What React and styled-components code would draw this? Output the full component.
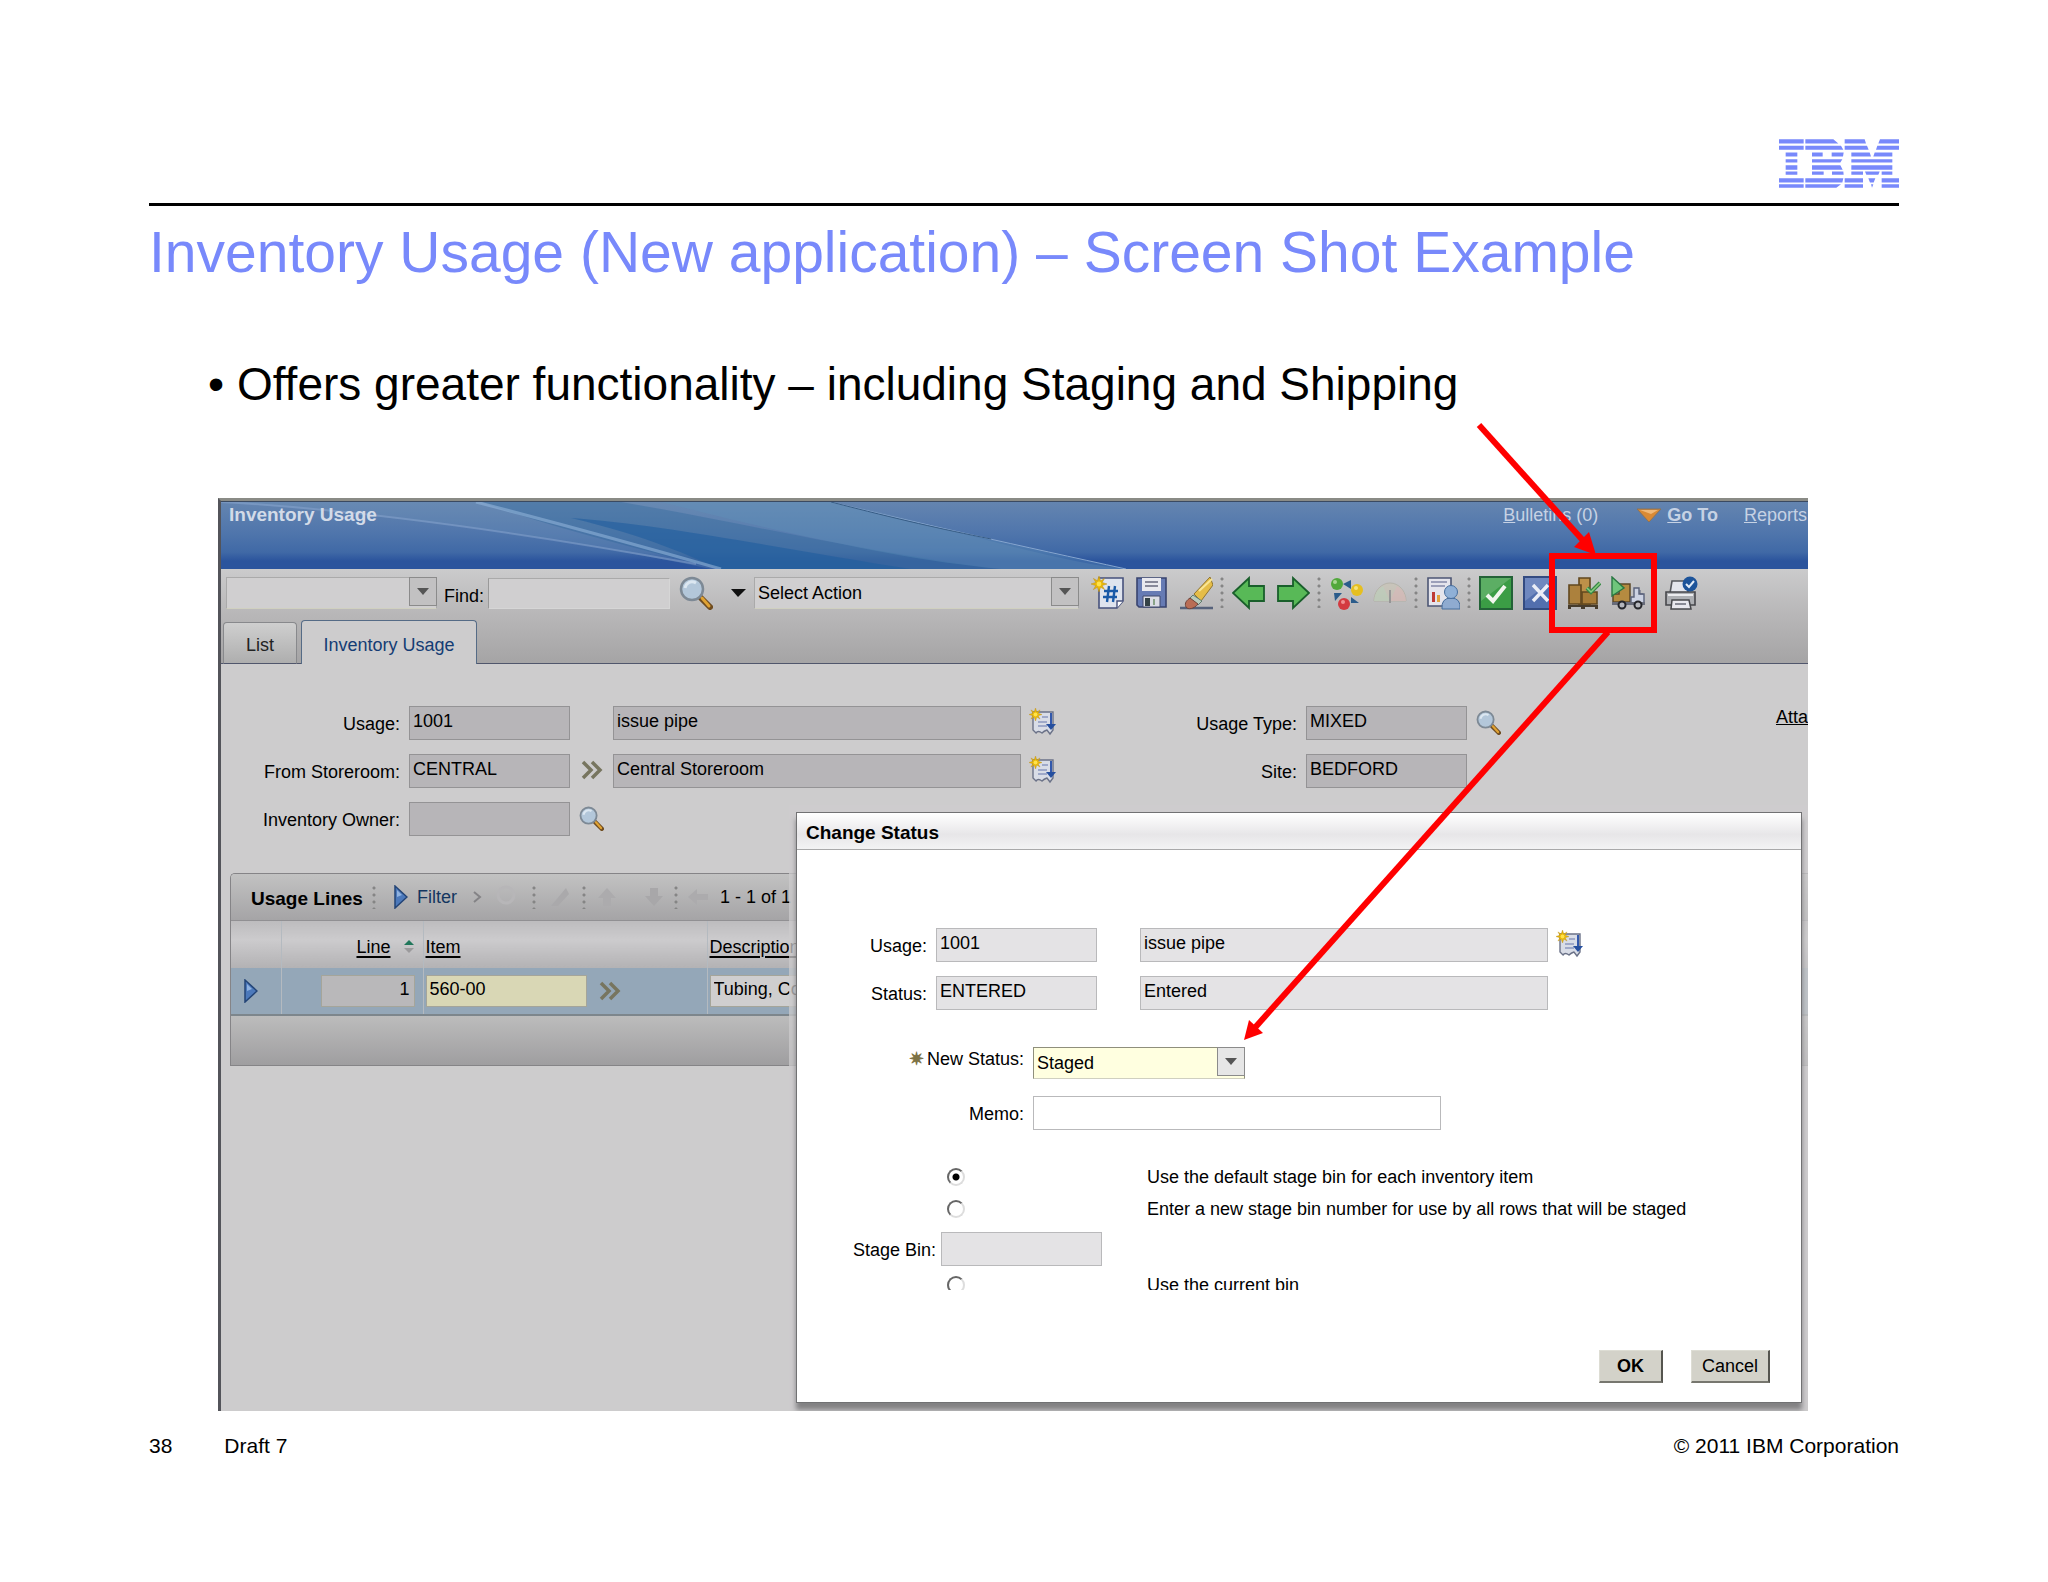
import React from "react";
import styled, { createGlobalStyle } from "styled-components";

const GlobalStyle = createGlobalStyle`
  * {
    box-sizing: border-box;
  }

  body {
    margin: 0;
    background: #fff;
    color: #000;
    font-family: "Liberation Sans", Arial, sans-serif;
  }

  input,
  select,
  button {
    font: inherit;
    color: inherit;
    margin: 0;
  }
`;

const Slide = styled.main`
  padding: 139px 149px 120px;
`;

const SlideHeader = styled.header`
  display: flex;
  justify-content: flex-end;
  padding-bottom: 15px;
  border-bottom: 3px solid #000;
`;

const SlideTitle = styled.h1`
  margin: 14px 0 0;
  color: #7889fb;
  font-size: 57px;
  font-weight: 400;
  line-height: 64px;
`;

const Bullet = styled.p`
  margin: 74px 0 88px;
  padding-left: 59px;
  font-size: 46px;
  line-height: 52px;
`;

const SlideFooter = styled.footer`
  display: flex;
  gap: 52px;
  margin-top: 23px;
  font-size: 21px;
  line-height: 24px;
`;

const Copyright = styled.span`
  margin-left: auto;
`;

const Figure = styled.div`
  position: relative;
  margin: 0 91px 0 69px;
`;

const Frame = styled.section`
  position: relative;
  overflow: hidden;
  min-height: 913px;
  border-left: 3px solid #53545a;
  border-top: 3px solid #8a8b86;
  background: #cdcccd;
  font-size: 18px;
  line-height: 22px;
`;

const Annotations = styled.svg`
  position: absolute;
  left: 0;
  top: 0;
  overflow: visible;
  pointer-events: none;
`;

const Banner = styled.div`
  position: relative;
  display: flex;
  align-items: flex-start;
  height: 68px;
  padding: 2px 1px 0 8px;
  border-top: 1px solid #3a4a62;
  background: linear-gradient(#6485b0, #5076ac 45%, #4069a6 75%, #2b549d 88%, #2b549d);
  color: #c6d2e4;
`;

const BannerArt = styled.svg`
  position: absolute;
  left: 0;
  top: 0;
  width: 100%;
  height: 100%;
`;

const AppTitle = styled.h2`
  position: relative;
  margin: 0 auto 0 0;
  font-size: 19px;
  line-height: 22px;
  color: #d3dbe8;
`;

const BannerLink = styled.a`
  position: relative;
  display: flex;
  align-items: center;
  gap: 5px;
  margin-left: ${(p) => p.$gap}px;
  color: inherit;
  text-decoration: none;
  white-space: pre;
  font-weight: ${(p) => (p.$bold ? 700 : 400)};
`;

const Toolbar = styled.div`
  border-bottom: 1px solid #50566c;
  background: linear-gradient(#cbcbcc, #b9b8b9 45%, #a5a4a5);
`;

const ToolRow = styled.div`
  display: flex;
  align-items: center;
  height: 51px;
  padding: 1px 0 4px 5px;
`;

const Combo = styled.div`
  position: relative;
  width: ${(p) => p.$width}px;
  height: 32px;
`;

const ComboSelect = styled.select`
  appearance: none;
  width: 100%;
  height: 100%;
  padding: 0 30px 1px 3px;
  border: 1px solid ${(p) => (p.$required ? "#8f8f7c" : "#aaa")};
  border-bottom-color: #d0d0c0;
  border-radius: 0;
  background: ${(p) => (p.$required ? "#ffffe0" : "#d0cfd0")};
`;

const ComboArrow = styled.span`
  position: absolute;
  top: 0;
  right: 0;
  display: flex;
  align-items: center;
  justify-content: center;
  width: 28px;
  height: 29px;
  border: 1px solid #8b8b8b;
  background: ${(p) => (p.$light ? "#e6e6e6" : "#c2c1c2")};
  pointer-events: none;
`;

const FindLabel = styled.label`
  margin: 6px 4px 0 7px;
`;

const FindInput = styled.input`
  width: 182px;
  height: 31px;
  margin-right: 9px;
  border: 1px solid #aaa;
  border-color: #aaa #d6d6d6 #d6d6d6 #999;
  background: #d0cfd0;
`;

const IconButton = styled.button`
  display: flex;
  flex: none;
  align-items: center;
  justify-content: center;
  padding: 0;
  border: 0;
  background: none;
`;

const Tools = styled.div`
  display: flex;
  gap: 10px;
  margin-left: 12px;
`;

const Dots = styled.span`
  flex: none;
  width: 4px;
  height: ${(p) => p.$height || 32}px;
  margin: 0 -2px 0 -3px;
  background: radial-gradient(circle at 2px 3px, #858585 1px, transparent 2px) 0 0 / 4px 7px;
`;

const PrintSlot = styled.span`
  display: flex;
  margin-left: 9px;
`;

const Tabs = styled.div`
  display: flex;
  align-items: flex-end;
  gap: 4px;
  height: 44px;
  margin-bottom: -1px;
  padding-left: 2px;
`;

const Tab = styled.button`
  width: ${(p) => p.$width}px;
  height: ${(p) => (p.$active ? 44 : 42)}px;
  padding: 4px 0 0;
  border: 1px solid ${(p) => (p.$active ? "#556b86" : "#88898c")};
  border-bottom: ${(p) => (p.$active ? "0" : "1px solid #50566c")};
  border-radius: 4px 4px 0 0;
  background: ${(p) => (p.$active ? "#cdcccd" : "linear-gradient(#cfcfcf, #aeaeae)")};
  color: ${(p) => (p.$active ? "#143c74" : "#222")};
`;

const Form = styled.div`
  display: grid;
  gap: 14px;
  padding: 42px 0 37px;
`;

const FormRow = styled.div`
  display: flex;
  height: 34px;
`;

const Label = styled.label`
  flex: none;
  width: ${(p) => p.$width}px;
  padding-top: ${(p) => (p.$raised ? 1 : 7)}px;
  margin-right: ${(p) => p.$gap || 9}px;
  text-align: right;
  white-space: nowrap;
`;

const Field = styled.input`
  flex: none;
  width: ${(p) => (p.$wide ? 408 : 161)}px;
  height: 34px;
  padding: 0 3px 4px;
  border: 1px solid ${(p) => (p.$light ? "#b9b9bb" : "#949395")};
  border-radius: 0;
  outline: 0;
  background: ${(p) => (p.$memo ? "#fff" : p.$light ? "#e4e3e5" : "#b7b5b8")};
`;

const Slot = styled.span`
  display: flex;
  flex: none;
  align-items: center;
  justify-content: center;
  width: 43px;
  height: 32px;
`;

const AttachLink = styled.a`
  margin-left: auto;
  color: #000;
`;

const LinesPanel = styled.section`
  margin-left: 9px;
  border: 1px solid #858487;
  border-right: 0;
  border-radius: 5px 0 0 0;
`;

const LinesBar = styled.div`
  display: flex;
  align-items: center;
  height: 47px;
  padding-left: 20px;
  border-bottom: 1px solid #919093;
  border-radius: 4px 0 0 0;
  background: linear-gradient(#c2c2c2, #a5a4a6);
`;

const LinesTitle = styled.h3`
  margin: 3px 12px 0 0;
  font-size: 19px;
  line-height: 22px;
`;

const FilterButton = styled.button`
  display: flex;
  align-items: center;
  gap: 9px;
  margin: 0 16px 0 20px;
  padding: 0;
  border: 0;
  background: none;
  color: #143660;
`;

const GhostIcons = styled.span`
  display: flex;
  justify-content: space-around;
  width: ${(p) => p.$width}px;
`;

const LinesTable = styled.table`
  width: 100%;
  border-collapse: collapse;
  table-layout: fixed;

  th {
    height: 47px;
    padding: 4px 0 0 2px;
    background: linear-gradient(#bdbcbe, #cccbcd 40%, #b3b2b4);
    text-align: left;
    font-weight: 400;
  }

  td {
    height: 46px;
    padding: 0 0 0 2px;
    background: #94a7b8;
  }

  th + th,
  td + td {
    border-left: 1px solid #b4bac0;
  }
`;

const Column = styled.col`
  width: ${(p) => p.$width}px;
`;

const SortLink = styled.a`
  color: #000;
  text-decoration: underline;
  text-decoration-thickness: 2px;
  text-underline-offset: 3px;
`;

const CellFlex = styled.div`
  display: flex;
  align-items: center;
  justify-content: ${(p) => (p.$end ? "flex-end" : "flex-start")};
  gap: 12px;
  padding: 0 8px 0 ${(p) => p.$indent || 0}px;
`;

const CellInput = styled.input`
  width: ${(p) => p.$width}px;
  height: 32px;
  padding: 0 4px 4px 3px;
  border: 1px solid #a5a59a;
  background: ${(p) => p.$fill};
  text-align: ${(p) => (p.$end ? "right" : "left")};
`;

const LinesFooter = styled.div`
  height: 51px;
  border-top: 2px solid #7d868c;
  background: linear-gradient(#bcbcbc, #9f9ea0);
`;

const Dialog = styled.div`
  position: absolute;
  top: 311px;
  left: 575px;
  right: 6px;
  display: flex;
  flex-direction: column;
  height: 591px;
  border: 1px solid #717173;
  background: #fff;
  box-shadow: 0 7px 5px rgba(80, 80, 82, 0.6), 0 0 0 7px rgba(205, 204, 205, 0.75);
`;

const DialogTitle = styled.h2`
  margin: 0;
  padding: 9px 0 5px 9px;
  border-bottom: 1px solid #a9a9aa;
  background: linear-gradient(#fff, #e7e6e8 60%, #f3f3f4);
  font-size: 19px;
  line-height: 22px;
`;

const DialogBody = styled.div`
  overflow: hidden;
  height: 440px;
  padding: 78px 0 0 1px;
`;

const DialogRow = styled.div`
  display: flex;
  margin-bottom: ${(p) => p.$after}px;
`;

const Required = styled.span`
  padding-right: 3px;
  color: #7d7345;
  font-weight: 700;
`;

const Option = styled.div`
  display: flex;
  align-items: center;
  height: 32px;
  padding-left: 149px;
`;

const BinOptions = styled.div`
  margin-bottom: 7px;
`;

const Radio = styled.input`
  appearance: none;
  flex: none;
  width: 18px;
  height: 18px;
  margin-right: 182px;
  border: 2px solid;
  border-color: #666 #ddd #ddd #666;
  border-radius: 50%;
  background: ${(p) =>
    p.defaultChecked ? "radial-gradient(circle, #000 3px, #fff 4px)" : "#fff"};
`;

const DialogActions = styled.div`
  display: flex;
  justify-content: flex-end;
  gap: 28px;
  margin-top: auto;
  padding: 0 31px 19px 0;
`;

const ActionButton = styled.button`
  width: ${(p) => p.$width}px;
  height: 33px;
  padding: 0;
  border: 1px solid #ddddd4;
  border-right: 2px solid #55554f;
  border-bottom: 2px solid #77776f;
  background: #d3d2c9;
  font-weight: ${(p) => (p.$primary ? 700 : 400)};
`;

function IbmLogo() {
  return (
    <svg width="120" height="49" viewBox="0 0 360 146" fill="#7889fb" role="img" aria-label="IBM">
      <path d="M0 0H74V13H0zM0 20H74V32H0zM20 40H55V52H20zM20 60H55V70H20zM20 78H55V92H20zM20 97H55V107H20zM0 117H74V130H0zM0 135H74V146H0z" />
      <path d="M79 0H163L178 13H79zM79 20H186L193 32H79zM99 40H131V52H99zM158 40H194L192 52H158zM99 60H190L184 70H99zM99 78H184L191 92H99zM99 97H134V107H99zM159 97H193L194 107H159zM79 117H193L190 130H79zM79 135H186L172 146H79z" />
      <path d="M197 0H257L261 13H197zM197 20H264L269 32H197zM217 40H272L276 52H217zM217 60H340V70H217zM217 78H340V92H217zM217 97H252V107H217zM197 117H252V130H197zM197 135H252V146H197z" />
      <path d="M303 0H360V13H298zM295 20H360V32H291zM287 40H340V52H283zM258 97H302L298 107H262zM308 97H340V107H308zM268 117H289L284 130H273zM308 117H360V130H308zM276 135H283L279 146zM308 135H360V146H308z" />
    </svg>
  );
}

function BannerLines() {
  return (
    <BannerArt viewBox="0 0 1587 67" preserveAspectRatio="none" aria-hidden="true">
      <path d="M0 0C180 14 330 34 490 67H900C790 50 700 16 610 0z" fill="#7398bd" opacity=".25" />
      <path d="M260 0C340 28 420 48 500 67H780C640 50 520 20 400 0z" fill="#2c6398" opacity=".35" />
      <path d="M350 16C440 22 580 50 690 67H500C470 55 430 35 350 16z" fill="#1f5e9e" opacity=".6" />
      <path d="M440 0C560 30 680 58 780 67H904C800 45 700 22 610 0z" fill="#5f93bb" opacity=".35" />
      <path d="M0 0C150 8 320 34 475 62" fill="none" stroke="#8aa5cf" strokeWidth="2" opacity=".5" />
      <path d="M255 0C340 22 420 44 500 67" fill="none" stroke="#90b2d8" strokeWidth="3" opacity=".6" />
      <path d="M610 0C700 22 800 44 905 67" fill="none" stroke="#86a6cf" strokeWidth="1" />
      <path d="M610 0C680 18 720 27 770 37" fill="none" stroke="#365c85" strokeWidth="1" />
    </BannerArt>
  );
}

function ArrowDown({ size = 12, color = "#555" }) {
  return (
    <svg width={size} height={size / 2 + 1} viewBox="0 0 12 7" aria-hidden="true">
      <path d="M0 0H12L6 7z" fill={color} />
    </svg>
  );
}

function Magnifier({ size = 34 }) {
  return (
    <svg width={size} height={size} viewBox="0 0 34 34" aria-hidden="true">
      <path d="M22 22L31 31" stroke="#6f4c20" strokeWidth="6" strokeLinecap="round" />
      <path d="M23 22L30 30" stroke="#e0a232" strokeWidth="3" strokeLinecap="round" />
      <circle cx="13" cy="13" r="11" fill="#b3c7da" stroke="#7d8995" strokeWidth="2.5" />
      <path d="M6 12C7 7 12 4 17 7" fill="none" stroke="#dce7f1" strokeWidth="3" />
    </svg>
  );
}

function Star() {
  return (
    <g>
      <path d="M10 0L12 6L17 3L14 8L20 10L14 12L17 17L12 14L10 20L8 14L3 17L6 12L0 10L6 8L3 3L8 6z" fill="#e9b707" stroke="#b98d1a" strokeWidth=".6" />
      <circle cx="10" cy="10" r="3" fill="#ffe24a" />
    </g>
  );
}

function NoteIcon() {
  return (
    <svg width="27" height="28" viewBox="0 0 27 28" aria-hidden="true">
      <path d="M4 4H24V22L21 26L18 22Q15 23 13 25Q9 22 7 25L4 22z" fill="#d9dde7" stroke="#6b7288" strokeWidth="1.4" />
      <path d="M13 9H19M9 14H18M9 18H18" stroke="#8c98c0" strokeWidth="1.5" />
      <path d="M22 5V17" stroke="#3258ac" strokeWidth="2" />
      <path d="M17 16H27L22 22z" fill="#264f9f" />
      <g transform="scale(.65)">
        <Star />
      </g>
    </svg>
  );
}

function Chevrons() {
  return (
    <svg width="22" height="20" viewBox="0 0 22 20" aria-hidden="true">
      <path d="M2 2L10 10L2 18M11 2L19 10L11 18" fill="none" stroke="#77755f" strokeWidth="3.5" />
    </svg>
  );
}

function PlayIcon() {
  return (
    <svg width="14" height="24" viewBox="0 0 14 24" aria-hidden="true">
      <path d="M1 1L13 12L1 23z" fill="#4c79bb" stroke="#234476" strokeWidth="1.5" />
      <path d="M3 5L8 10L3 12z" fill="#8fb2e0" />
    </svg>
  );
}

const toolIcons = {
  "New Usage": (
    <>
      <path d="M8 2H32V25L26 32H8z" fill="#dfe4ee" stroke="#47527c" strokeWidth="1.6" />
      <path d="M32 25H26V32" fill="#fff" stroke="#47527c" strokeWidth="1.4" />
      <path d="M18 10L16 26M24 10L22 26M13 15H27M12 21H26" stroke="#195aa8" strokeWidth="2.4" />
      <g transform="scale(.8)">
        <Star />
      </g>
    </>
  ),
  Save: (
    <>
      <path d="M2 2H31V31H4L2 29z" fill="#667bb4" stroke="#39446f" strokeWidth="1.6" />
      <path d="M7 2H26V15H7z" fill="#e9e9ef" />
      <path d="M10 6H23M10 10H23" stroke="#88899a" strokeWidth="2" />
      <path d="M8 20H25V31H8z" fill="#dbdde5" stroke="#404a6d" />
      <path d="M10 22H15V30H10z" fill="#344246" />
      <path d="M18 23H20V29H18z" fill="#89a488" />
    </>
  ),
  Clear: (
    <>
      <path d="M1 32H34" stroke="#56627b" strokeWidth="2.5" />
      <path d="M15 18L31 1L34 9L22 25z" fill="#e5bd48" stroke="#8f7430" />
      <path d="M20 15L33 3" stroke="#f8e594" strokeWidth="2" />
      <path d="M14 19L23 25L19 29L10 23z" fill="#b9cbbb" stroke="#5f7b70" />
      <path d="M11 22L19 28C15 33 9 34 7 31C5 27 8 24 11 22z" fill="#b96d55" stroke="#70443a" />
    </>
  ),
  "Previous Record": <path d="M1 17L17 2V10H32V25H17V32z" fill="#58b957" stroke="#195f2b" strokeWidth="1.8" />,
  "Next Record": <path d="M33 17L17 2V10H2V25H17V32z" fill="#58b957" stroke="#195f2b" strokeWidth="1.8" />,
  Workflow: (
    <>
      <path d="M14 8L22 4V13zM5 17H13L6 25zM22 21V27H30z" fill="#2b5c8b" />
      <circle cx="8" cy="8" r="6" fill="#52a83c" />
      <circle cx="28" cy="14" r="6" fill="#e6bf20" />
      <circle cx="15" cy="28" r="6" fill="#d33a40" />
      <circle cx="6" cy="6" r="2" fill="#a9d793" />
      <circle cx="27" cy="12" r="2" fill="#f6e47c" />
      <circle cx="14" cy="26" r="2" fill="#f08f90" />
    </>
  ),
  Gauge: (
    <g opacity=".55">
      <path d="M1 25A16 18 0 0 1 33 25z" fill="#ccc5b2" stroke="#aaa796" />
      <path d="M1 25A16 18 0 0 1 10 10L17 25z" fill="#bed3b5" />
      <path d="M33 25A16 18 0 0 0 24 10L17 25z" fill="#dfb8b1" />
      <path d="M17 14V27" stroke="#777" strokeWidth="2" />
    </g>
  ),
  Reports: (
    <>
      <path d="M2 2H25V30H2z" fill="#e4e4ec" stroke="#4c5674" strokeWidth="1.6" />
      <path d="M5 6H21M5 10H19" stroke="#8288a8" strokeWidth="1.6" />
      <path d="M6 16H9V26H6z" fill="#be3a35" />
      <path d="M11 19H14V26H11z" fill="#e2a23b" />
      <path d="M16 33Q15 22 25 22Q35 22 34 33z" fill="#8fabd0" stroke="#476e9d" />
      <circle cx="25" cy="16" r="6.5" fill="#8fb0d7" stroke="#476e9d" />
    </>
  ),
  Approve: (
    <>
      <path d="M1 1H33V33H1z" fill="#3b9d45" stroke="#236237" strokeWidth="2" />
      <path d="M2 2H32L2 25z" fill="#73b979" opacity=".6" />
      <path d="M8 19L14 25L26 10" fill="none" stroke="#f1f6ee" strokeWidth="4" />
    </>
  ),
  Reject: (
    <>
      <path d="M1 1H33V33H1z" fill="#526fae" stroke="#334b81" strokeWidth="2" />
      <path d="M2 2H32L2 25z" fill="#839ac9" opacity=".6" />
      <path d="M10 9L25 25M25 9L10 25" stroke="#eaedf6" strokeWidth="3.4" />
    </>
  ),
  Stage: (
    <>
      <path d="M12 2H23V29H12z" fill="#bd9149" stroke="#62481f" strokeWidth="1.6" />
      <path d="M2 9H14V28H2z" fill="#ac813d" stroke="#62481f" strokeWidth="1.6" />
      <path d="M15 16H30V28H15z" fill="#a87b37" stroke="#62481f" strokeWidth="1.6" />
      <path d="M1 29H31V33H28V31H18V33H14V31H4V33H1z" fill="#473c2c" />
      <path d="M20 12L24 16L33 7" fill="none" stroke="#358847" strokeWidth="4" />
      <path d="M20 12L24 16L33 7" fill="none" stroke="#8acb7c" strokeWidth="1.5" />
    </>
  ),
  Ship: (
    <>
      <path d="M8 8H19V26H2V18H8z" fill="#b58b40" stroke="#5d4927" strokeWidth="1.5" />
      <path d="M1 1L13 12L1 20z" fill="#6fc57b" stroke="#287842" strokeWidth="1.4" />
      <path d="M23 12H28V18H33V28H20V21H23z" fill="#ccd2e3" stroke="#59617a" strokeWidth="1.4" />
      <path d="M29 14V18H32" fill="none" stroke="#59617a" />
      <path d="M1 26H34V29H1z" fill="#686c7a" />
      <circle cx="11" cy="29" r="3.5" fill="#b4b6bc" stroke="#25262b" strokeWidth="2" />
      <circle cx="27" cy="29" r="3.5" fill="#b4b6bc" stroke="#25262b" strokeWidth="2" />
    </>
  ),
  Print: (
    <>
      <path d="M8 5H24V17H6z" fill="#e4e6ed" stroke="#56585e" strokeWidth="1.6" />
      <path d="M2 16H31V29H2z" fill="#adafb3" stroke="#46474b" strokeWidth="1.6" />
      <path d="M4 19H29" stroke="#ececef" strokeWidth="2" />
      <path d="M8 24H25L27 33H7z" fill="#e8e8ee" stroke="#46474b" strokeWidth="1.5" />
      <path d="M11 28H22" stroke="#686b77" strokeWidth="1.5" />
      <circle cx="26" cy="8" r="7.5" fill="#1d549a" />
      <path d="M22 8L25 11L30 5" fill="none" stroke="#e3edf8" strokeWidth="2" />
    </>
  ),
};

const toolGroups = [
  ["New Usage", "Save", "Clear"],
  ["Previous Record", "Next Record"],
  ["Workflow", "Gauge"],
  ["Reports"],
  ["Approve", "Reject", "Stage", "Ship"],
];

function Tool({ name }) {
  return (
    <IconButton aria-label={name}>
      <svg width="34" height="34" viewBox="0 0 34 34" aria-hidden="true">
        {toolIcons[name]}
      </svg>
    </IconButton>
  );
}

function AppToolbar() {
  return (
    <Toolbar>
      <ToolRow>
        <Combo $width={211}>
          <ComboSelect aria-label="Query">
            <option></option>
          </ComboSelect>
          <ComboArrow>
            <ArrowDown />
          </ComboArrow>
        </Combo>
        <FindLabel htmlFor="find">Find:</FindLabel>
        <FindInput id="find" />
        <IconButton aria-label="Find">
          <Magnifier />
        </IconButton>
        <IconButton aria-label="Search options">
          <svg width="41" height="12" viewBox="0 0 41 12" aria-hidden="true">
            <path d="M18 2H33L25 10z" fill="#111" />
          </svg>
        </IconButton>
        <Combo $width={325}>
          <ComboSelect aria-label="Action">
            <option>Select Action</option>
          </ComboSelect>
          <ComboArrow>
            <ArrowDown />
          </ComboArrow>
        </Combo>
        <Tools>
          {toolGroups.map((group, index) => (
            <React.Fragment key={index}>
              {index > 0 && <Dots />}
              {group.map((name) => (
                <Tool key={name} name={name} />
              ))}
            </React.Fragment>
          ))}
          <PrintSlot>
            <Tool name="Print" />
          </PrintSlot>
        </Tools>
      </ToolRow>
      <Tabs>
        <Tab $width={74}>List</Tab>
        <Tab $width={176} $active>
          Inventory Usage
        </Tab>
      </Tabs>
    </Toolbar>
  );
}

function UsageForm() {
  return (
    <Form>
      <FormRow>
        <Label htmlFor="usage" $width={179}>Usage:</Label>
        <Field id="usage" defaultValue="1001" readOnly />
        <Slot />
        <Field aria-label="Usage description" defaultValue="issue pipe" readOnly $wide />
        <Slot>
          <NoteIcon />
        </Slot>
        <Label htmlFor="type" $width={233}>Usage Type:</Label>
        <Field id="type" defaultValue="MIXED" readOnly />
        <Slot>
          <Magnifier size={25} />
        </Slot>
        <AttachLink href="#attachments">Atta</AttachLink>
      </FormRow>
      <FormRow>
        <Label htmlFor="storeroom" $width={179}>From Storeroom:</Label>
        <Field id="storeroom" defaultValue="CENTRAL" readOnly />
        <Slot>
          <Chevrons />
        </Slot>
        <Field aria-label="Storeroom description" defaultValue="Central Storeroom" readOnly $wide />
        <Slot>
          <NoteIcon />
        </Slot>
        <Label htmlFor="site" $width={233}>Site:</Label>
        <Field id="site" defaultValue="BEDFORD" readOnly />
      </FormRow>
      <FormRow>
        <Label htmlFor="owner" $width={179}>Inventory Owner:</Label>
        <Field id="owner" readOnly />
        <Slot>
          <Magnifier size={25} />
        </Slot>
      </FormRow>
    </Form>
  );
}

function UsageLines() {
  return (
    <LinesPanel>
      <LinesBar>
        <LinesTitle>Usage Lines</LinesTitle>
        <Dots $height={24} />
        <FilterButton>
          <PlayIcon />
          Filter
        </FilterButton>
        <svg width="9" height="12" viewBox="0 0 9 12" aria-hidden="true">
          <path d="M1 1L7 6L1 11" fill="none" stroke="#848386" strokeWidth="2" />
        </svg>
        <GhostIcons $width={53}>
          <svg width="26" height="26" viewBox="0 0 26 26" aria-hidden="true">
            <circle cx="11" cy="11" r="8" fill="none" stroke="#b7b6b8" strokeWidth="3" />
          </svg>
        </GhostIcons>
        <Dots $height={24} />
        <GhostIcons $width={51}>
          <svg width="26" height="26" viewBox="0 0 26 26" aria-hidden="true">
            <path d="M5 22L20 4L23 10L12 22z" fill="#aaa9ab" />
          </svg>
        </GhostIcons>
        <Dots $height={24} />
        <GhostIcons $width={93}>
          <svg width="26" height="26" viewBox="0 0 26 26" aria-hidden="true">
            <path d="M13 4L22 14H17V22H9V14H4z" fill="#acabad" />
          </svg>
          <svg width="26" height="26" viewBox="0 0 26 26" aria-hidden="true">
            <path d="M13 22L22 12H17V4H9V12H4z" fill="#a8a7a9" />
          </svg>
        </GhostIcons>
        <Dots $height={24} />
        <GhostIcons $width={44}>
          <svg width="26" height="26" viewBox="0 0 26 26" aria-hidden="true">
            <path d="M3 13L12 5V10H23V16H12V21z" fill="#acabad" />
          </svg>
        </GhostIcons>
        1 - 1 of 1
      </LinesBar>
      <LinesTable>
        <colgroup>
          <Column $width={50} />
          <Column $width={142} />
          <Column $width={284} />
          <Column />
        </colgroup>
        <thead>
          <tr>
            <th aria-label="Details" />
            <th>
              <CellFlex $end>
                <SortLink href="#line">Line</SortLink>
                <svg width="12" height="16" viewBox="0 0 12 16" aria-hidden="true">
                  <path d="M1 6L6 1L11 6z" fill="#21775b" />
                  <path d="M1 9H11L6 14z" fill="#9b9a9c" />
                </svg>
              </CellFlex>
            </th>
            <th>
              <SortLink href="#item">Item</SortLink>
            </th>
            <th>
              <SortLink href="#description">Description</SortLink>
            </th>
          </tr>
        </thead>
        <tbody>
          <tr>
            <td>
              <CellFlex $indent={11}>
                <IconButton aria-label="View details">
                  <PlayIcon />
                </IconButton>
              </CellFlex>
            </td>
            <td>
              <CellFlex $end>
                <CellInput aria-label="Line" defaultValue="1" $width={94} $fill="#b9b8ba" $end />
              </CellFlex>
            </td>
            <td>
              <CellFlex>
                <CellInput aria-label="Item" defaultValue="560-00" $width={161} $fill="#d9d7b5" />
                <Chevrons />
              </CellFlex>
            </td>
            <td>
              <CellInput aria-label="Description" defaultValue="Tubing, Co" $width={400} $fill="#cfcecf" />
            </td>
          </tr>
        </tbody>
      </LinesTable>
      <LinesFooter />
    </LinesPanel>
  );
}

function ChangeStatus() {
  return (
    <Dialog role="dialog" aria-labelledby="dialog-title">
      <DialogTitle id="dialog-title">Change Status</DialogTitle>
      <DialogBody>
        <DialogRow $after={14}>
          <Label htmlFor="d-usage" $width={129}>Usage:</Label>
          <Field id="d-usage" defaultValue="1001" readOnly $light />
          <Slot />
          <Field aria-label="Description" defaultValue="issue pipe" readOnly $light $wide />
          <Slot>
            <NoteIcon />
          </Slot>
        </DialogRow>
        <DialogRow $after={37}>
          <Label htmlFor="d-status" $width={129}>Status:</Label>
          <Field id="d-status" defaultValue="ENTERED" readOnly $light />
          <Slot />
          <Field aria-label="Status description" defaultValue="Entered" readOnly $light $wide />
        </DialogRow>
        <DialogRow $after={17}>
          <Label htmlFor="new-status" $width={226} $raised>
            <Required>✷</Required>
            New Status:
          </Label>
          <Combo $width={212}>
            <ComboSelect id="new-status" $required>
              <option>Staged</option>
            </ComboSelect>
            <ComboArrow $light>
              <ArrowDown />
            </ComboArrow>
          </Combo>
        </DialogRow>
        <DialogRow $after={31}>
          <Label htmlFor="memo" $width={226}>Memo:</Label>
          <Field id="memo" $light $wide $memo />
        </DialogRow>
        <BinOptions>
          <Option>
            <Radio type="radio" name="bin" id="bin-default" defaultChecked />
            <label htmlFor="bin-default">Use the default stage bin for each inventory item</label>
          </Option>
          <Option>
            <Radio type="radio" name="bin" id="bin-new" />
            <label htmlFor="bin-new">Enter a new stage bin number for use by all rows that will be staged</label>
          </Option>
        </BinOptions>
        <DialogRow $after={3}>
          <Label htmlFor="stage-bin" $width={138} $gap={5}>Stage Bin:</Label>
          <Field id="stage-bin" readOnly $light />
        </DialogRow>
        <Option>
          <Radio type="radio" name="bin" id="bin-current" />
          <label htmlFor="bin-current">Use the current bin</label>
        </Option>
      </DialogBody>
      <DialogActions>
        <ActionButton $width={64} $primary>OK</ActionButton>
        <ActionButton $width={79}>Cancel</ActionButton>
      </DialogActions>
    </Dialog>
  );
}

export default function App() {
  return (
    <Slide>
      <GlobalStyle />
      <SlideHeader>
        <IbmLogo />
      </SlideHeader>
      <SlideTitle>Inventory Usage (New application) – Screen Shot Example</SlideTitle>
      <Bullet>• Offers greater functionality – including Staging and Shipping</Bullet>
      <Figure>
        <Frame>
          <Banner>
            <BannerLines />
            <AppTitle>Inventory Usage</AppTitle>
            <BannerLink href="#bulletins" $gap={0}>
              <span><u>B</u>ulletins (0)</span>
            </BannerLink>
            <BannerLink href="#goto" $gap={38} $bold>
              <svg width="26" height="15" viewBox="0 0 26 15" aria-hidden="true">
                <path d="M1 1H25L13 14z" fill="#d98a35" stroke="#8d7357" />
                <path d="M4 2H22L15 6z" fill="#efb878" />
              </svg>
              <span><u>G</u>o To</span>
            </BannerLink>
            <BannerLink href="#reports" $gap={26}>
              <span><u>R</u>eports</span>
            </BannerLink>
          </Banner>
          <AppToolbar />
          <UsageForm />
          <UsageLines />
          <ChangeStatus />
        </Frame>
        <Annotations width="1590" height="913" aria-hidden="true">
          <g stroke="#f00" strokeWidth="6" fill="none">
            <path d="M1261 -73L1370 48" />
            <rect x="1334" y="58" width="102" height="74" />
            <path d="M1390 134L1034 533" />
          </g>
          <path d="M1378 57L1356 49L1371 34z" fill="#f00" />
          <path d="M1026 542L1031 522L1045 535z" fill="#f00" />
        </Annotations>
      </Figure>
      <SlideFooter>
        <span>38</span>
        <span>Draft 7</span>
        <Copyright>© 2011 IBM Corporation</Copyright>
      </SlideFooter>
    </Slide>
  );
}
